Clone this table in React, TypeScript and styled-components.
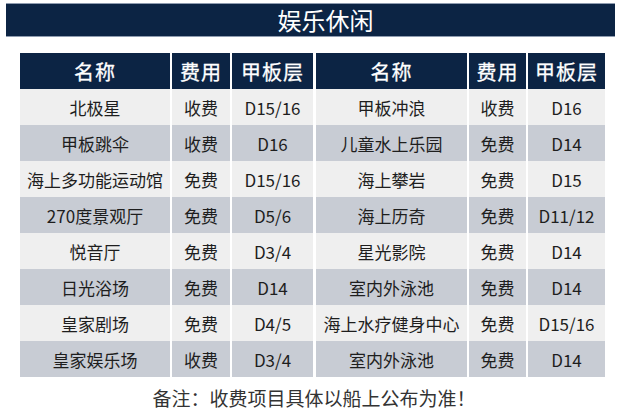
import React from 'react'
import styled, { createGlobalStyle } from 'styled-components'

type Row = [string, string, string]

const leftRows: Row[] = [
  ['北极星', '收费', 'D15/16'],
  ['甲板跳伞', '收费', 'D16'],
  ['海上多功能运动馆', '免费', 'D15/16'],
  ['270度景观厅', '免费', 'D5/6'],
  ['悦音厅', '免费', 'D3/4'],
  ['日光浴场', '免费', 'D14'],
  ['皇家剧场', '免费', 'D4/5'],
  ['皇家娱乐场', '收费', 'D3/4'],
]

const rightRows: Row[] = [
  ['甲板冲浪', '收费', 'D16'],
  ['儿童水上乐园', '免费', 'D14'],
  ['海上攀岩', '免费', 'D15'],
  ['海上历奇', '免费', 'D11/12'],
  ['星光影院', '免费', 'D14'],
  ['室内外泳池', '免费', 'D14'],
  ['海上水疗健身中心', '免费', 'D15/16'],
  ['室内外泳池', '免费', 'D14'],
]

// 紺色 #0c2444
const navy = '#0c2444'

const GlobalStyle = createGlobalStyle`
  html, body {
    margin: 0;
    padding: 0;
    background: #ffffff;
  }
  body {
    font-family: "Noto Sans CJK SC", "Noto Sans", sans-serif;
    color: #222;
  }
`

const Page = styled.div`
  width: 620px;
  height: 417px;
  padding-top: 3px;
  box-sizing: border-box;
  overflow: hidden;
`

const TitleBar = styled.div`
  margin: 0 5px 0 6px;
  height: 34px;
  box-sizing: border-box;
  background: ${navy};
  border-top: 1px solid #8f9cb0;
  border-bottom: 1px solid #8f9cb0;
  color: #fff;
  font-size: 24px;
  line-height: 32px;
  text-align: center;
  padding-left: 30px;
`

const Tables = styled.div`
  display: flex;
  gap: 3px;
  margin: 16px 15px 0 20px;
`

const Table = styled.div<{ cols: string }>`
  display: grid;
  grid-template-columns: ${props => props.cols};
  column-gap: 2px;
  background: #ffffff;
`

const HeadCell = styled.div`
  background: ${navy};
  color: #fff;
  height: 36px;
  font-size: 20px;
  font-weight: 400;
  -webkit-text-stroke: 0.3px #fff;
  display: flex;
  align-items: center;
  justify-content: center;
  letter-spacing: 1px;
`

const Cell = styled.div<{ shade: boolean }>`
  background: ${props => (props.shade ? '#c8ccd4' : '#efefef')};
  height: 36px;
  font-size: 17px;
  display: flex;
  align-items: center;
  justify-content: center;
  white-space: nowrap;
  color: #1e1e1e;
`

const Note = styled.div`
  text-align: center;
  font-size: 19px;
  color: #333;
  margin-top: 7px;
  padding-left: 8px;
`

const DataTable = ({ rows, cols }: { rows: Row[]; cols: string }) => (
  <Table cols={cols}>
    <HeadCell>名称</HeadCell>
    <HeadCell>费用</HeadCell>
    <HeadCell>甲板层</HeadCell>
    {rows.map((r, i) =>
      r.map((v, j) => (
        <Cell key={`${i}-${j}`} shade={i % 2 === 1}>
          {v}
        </Cell>
      ))
    )}
  </Table>
)

const App = () => {
  return (
    <Page>
      <GlobalStyle />
      <TitleBar>娱乐休闲</TitleBar>
      <Tables>
        <DataTable rows={leftRows} cols="150px 58px 81px" />
        <DataTable rows={rightRows} cols="151px 57px 77px" />
      </Tables>
      <Note>备注：收费项目具体以船上公布为准！</Note>
    </Page>
  )
}

export default App
